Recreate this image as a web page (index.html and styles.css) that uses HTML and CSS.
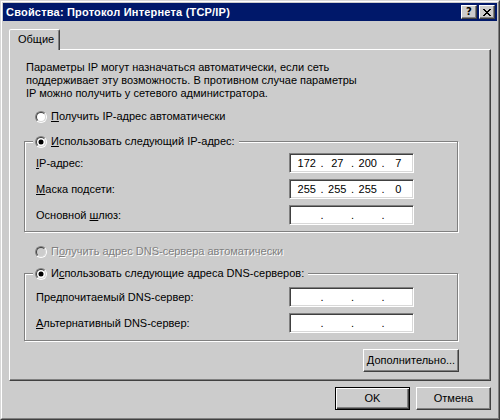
FILE: index.html
```html
<!DOCTYPE html>
<html lang="ru">
<head>
<meta charset="utf-8">
<title>Свойства: Протокол Интернета (TCP/IP)</title>
<link rel="stylesheet" href="styles.css">
</head>
<body>
<div class="window">
  <div class="frame">
    <div class="titlebar">
      <span class="title">Свойства: Протокол Интернета (TCP/IP)</span>
      <div class="tbtns">
        <span class="tbtn help">?</span>
        <span class="tbtn">
          <svg width="8" height="7" viewBox="0 0 8 7"><path d="M0 0h2v1h-2z M6 0h2v1h-2z M1 1h2v1h-2z M5 1h2v1h-2z M2 2h4v1h-4z M3 3h2v1h-2z M2 4h4v1h-4z M1 5h2v1h-2z M5 5h2v1h-2z M0 6h2v1h-2z M6 6h2v1h-2z" fill="#000"/></svg>
        </span>
      </div>
    </div>
    <div class="tabstrip">
      <div class="tab">Общие</div>
    </div>
    <div class="panel">
      <p class="intro">Параметры IP могут назначаться автоматически, если сеть<br>поддерживает эту возможность. В противном случае параметры<br>IP можно получить у сетевого администратора.</p>
      <div class="opt first"><span class="radio"><span class="radio-in"></span></span><span><u>П</u>олучить IP-адрес автоматически</span></div>
      <fieldset class="group g1">
        <legend class="opt"><span class="radio"><span class="radio-in"><span class="dot"></span></span></span><span><u>И</u>спользовать следующий IP-адрес:</span></legend>
        <div class="rows">
          <span><u>I</u>P-адрес:</span>
          <div class="ip"><span>172</span><span>.</span><span>27</span><span>.</span><span>200</span><span>.</span><span>7</span></div>
          <span><u>М</u>аска подсети:</span>
          <div class="ip"><span>255</span><span>.</span><span>255</span><span>.</span><span>255</span><span>.</span><span>0</span></div>
          <span>Основной <u>ш</u>люз:</span>
          <div class="ip"><span></span><span>.</span><span></span><span>.</span><span></span><span>.</span><span></span></div>
        </div>
      </fieldset>
      <div class="opt disabled"><span class="radio"><span class="radio-in"></span></span><span>П<u>о</u>лучить адрес DNS-сервера автоматически</span></div>
      <fieldset class="group g2">
        <legend class="opt"><span class="radio"><span class="radio-in"><span class="dot"></span></span></span><span>И<u>с</u>пользовать следующие адреса DNS-серверов:</span></legend>
        <div class="rows">
          <span>Пре<u>д</u>почитаемый DNS-сервер:</span>
          <div class="ip"><span></span><span>.</span><span></span><span>.</span><span></span><span>.</span><span></span></div>
          <span><u>А</u>льтернативный DNS-сервер:</span>
          <div class="ip"><span></span><span>.</span><span></span><span>.</span><span></span><span>.</span><span></span></div>
        </div>
      </fieldset>
      <div class="adv"><button class="btn wide"><u>Д</u>ополнительно...</button></div>
    </div>
    <div class="footer">
      <button class="btn default">OK</button>
      <button class="btn">Отмена</button>
    </div>
  </div>
</div>
</body>
</html>
```
FILE: styles.css
```css
* { box-sizing: border-box; }
body {
  margin: 0;
  background: #cccccc;
  font-family: "Liberation Sans", Arial, sans-serif;
  font-size: 11px;
  color: #000;
}
u { text-decoration: underline; text-underline-offset: 1px; }
.window {
  width: 500px;
  height: 420px;
  border: 1px solid;
  border-color: #d8d8d8 #404040 #404040 #d8d8d8;
  background: #cccccc;
}
.frame {
  height: 100%;
  border: 1px solid;
  border-color: #ffffff #808080 #808080 #ffffff;
  padding: 1px;
  display: flex;
  flex-direction: column;
}
.titlebar {
  height: 18px;
  flex: none;
  background: #00186a;
  display: flex;
  align-items: center;
  justify-content: space-between;
  padding: 0 2px 0 3px;
}
.title {
  color: #fff;
  font-weight: bold;
  font-size: 11px;
  line-height: 13px;
  letter-spacing: 0.2px;
}
.tbtns { display: flex; gap: 2px; }
.tbtn {
  width: 16px;
  height: 14px;
  background: #cccccc;
  border: 1px solid;
  border-color: #ffffff #404040 #404040 #ffffff;
  box-shadow: inset -1px -1px 0 #808080;
  display: flex;
  align-items: center;
  justify-content: center;
}
.tbtn.help {
  font-family: "DejaVu Sans", sans-serif;
  font-weight: bold;
  font-size: 10px;
  line-height: 12px;
}
.tabstrip {
  display: flex;
  flex: none;
  padding: 8px 6px 0;
}
.tab {
  width: 51px;
  height: 21px;
  margin-bottom: -1px;
  z-index: 1;
  background: #cccccc;
  border: 1px solid;
  border-bottom: none;
  border-color: #ffffff #404040 transparent #ffffff;
  border-top-left-radius: 2px;
  border-top-right-radius: 2px;
  box-shadow: inset -1px 0 0 #808080;
  padding: 3px 0 0 8px;
  line-height: 13px;
}
.panel {
  flex: none;
  margin: 0 6px;
  height: 332px;
  border: 1px solid;
  border-color: #ffffff #404040 #404040 #ffffff;
  box-shadow: inset -1px -1px 0 #808080;
  padding: 11px 32px 0 14px;
}
.intro {
  margin: 0 0 0 2px;
  line-height: 13px;
}
.opt {
  display: flex;
  align-items: center;
  gap: 4px;
  height: 13px;
  line-height: 13px;
  white-space: nowrap;
}
.opt.first { margin: 10px 0 0 11px; }
.opt.disabled {
  margin: 13px 0 0 11px;
  color: #808080;
  text-shadow: 1px 1px 0 #ffffff;
}
.radio {
  width: 12px;
  height: 12px;
  flex: none;
  border-radius: 50%;
  border: 1px solid;
  border-color: #808080 #ffffff #ffffff #808080;
  display: flex;
}
.radio-in {
  width: 10px;
  height: 10px;
  border-radius: 50%;
  border: 1px solid;
  border-color: #404040 #d8d8d8 #d8d8d8 #404040;
  background: #ffffff;
  display: flex;
  align-items: center;
  justify-content: center;
}
.disabled .radio-in { background: #cccccc; }
.dot {
  width: 4px;
  height: 4px;
  border-radius: 50%;
  background: #000;
  box-shadow: 0 0 0 0.5px #000;
}
.group {
  margin: 0;
  min-inline-size: 0;
  border: 1px solid #808080;
  box-shadow: 1px 1px 0 #ffffff, inset 1px 1px 0 #ffffff;
}
.group legend {
  padding: 0 4px 0 2px;
  margin: 0;
  background: #cccccc;
}
.g1 { margin-top: 12px; padding: 5px 0 6px 8px; }
.g2 { margin-top: 9px; padding: 7px 0 7px 8px; }
.rows {
  display: grid;
  grid-template-columns: 253px 125px;
  row-gap: 6px;
  margin-left: 3px;
  align-items: center;
  line-height: 13px;
}
.ip {
  height: 20px;
  border: 1px solid;
  border-color: #808080 #ffffff #ffffff #808080;
  box-shadow: inset 1px 1px 0 #404040, inset -1px -1px 0 #d8d8d8;
  background: #ffffff;
  padding: 1px 1px 1px 3px;
  display: grid;
  grid-template-columns: 1fr 3px 1fr 3px 1fr 3px 1fr;
  line-height: 16px;
  text-align: center;
}
.adv {
  display: flex;
  justify-content: flex-end;
  margin: 8px -1px 0 0;
}
.btn {
  width: 75px;
  height: 23px;
  padding: 0;
  font: inherit;
  line-height: 13px;
  color: #000;
  background: #cccccc;
  border: 1px solid;
  border-color: #ffffff #404040 #404040 #ffffff;
  box-shadow: inset -1px -1px 0 #808080;
}
.btn.wide { width: 96px; }
.btn.default {
  border-color: #000;
  box-shadow: inset 1px 1px 0 #ffffff, inset -1px -1px 0 #404040, inset -2px -2px 0 #808080;
}
.footer {
  display: flex;
  justify-content: flex-end;
  gap: 6px;
  padding: 6px 6px 0;
}
```
